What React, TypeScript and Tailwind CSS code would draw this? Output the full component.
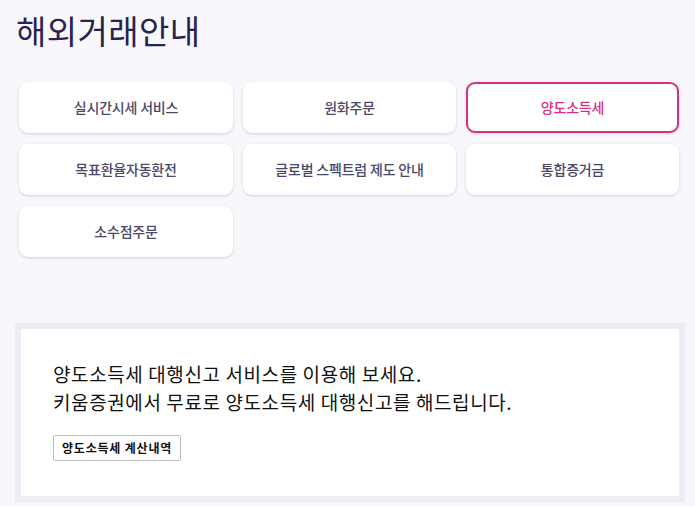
import React from "react";

const items = [
  { label: "실시간시세 서비스", active: false },
  { label: "원화주문", active: false },
  { label: "양도소득세", active: true },
  { label: "목표환율자동환전", active: false },
  { label: "글로벌 스펙트럼 제도 안내", active: false },
  { label: "통합증거금", active: false },
  { label: "소수점주문", active: false },
];

export default function App() {
  return (
    <div
      className="w-[695px] h-[506px] bg-[#f8f8fc] overflow-hidden"
      style={{ fontFamily: '"Noto Sans CJK KR", "Noto Sans", sans-serif' }}
    >
      <h1 className="pt-[6px] pl-[16px] text-[33px] leading-[48px] font-normal text-[#28224f] tracking-[0.4px]">
        해외거래안내
      </h1>
      <div className="mt-[28px] pl-[19px] pr-[16px] grid grid-cols-[214px_213px_213px] gap-x-[10px] gap-y-[11px]">
        {items.map((it) => (
          <div
            key={it.label}
            className={
              it.active
                ? "h-[51px] rounded-[9px] bg-white border-2 border-[#d63185] shadow-[0_1px_3px_rgba(60,60,110,0.18)] flex items-center justify-center text-[14px] tracking-[-0.2px] font-medium text-[#d63185]"
                : "h-[51px] rounded-[9px] bg-white shadow-[0_1px_3px_rgba(60,60,110,0.22)] flex items-center justify-center text-[14px] tracking-[-0.2px] font-medium text-[#4a4867]"
            }
          >
            {it.label}
          </div>
        ))}
      </div>
      <div className="mt-[66px] ml-[15px] mr-[10px] h-[179px] border-[6px] border-[#ececf4] bg-white px-[26px] pt-[31px]">
        <p className="text-[19px] leading-[28px] tracking-[0.6px] font-normal text-[#111] ml-[6px]">
          양도소득세 대행신고 서비스를 이용해 보세요.
          <br />
          키움증권에서 무료로 양도소득세 대행신고를 해드립니다.
        </p>
        <button className="mt-[19px] ml-[6px] h-[26px] px-[8px] border border-[#bdbdbd] rounded-[2px] bg-white text-[12px] tracking-[0.8px] font-bold text-[#111] leading-none">
          양도소득세 계산내역
        </button>
      </div>
    </div>
  );
}
